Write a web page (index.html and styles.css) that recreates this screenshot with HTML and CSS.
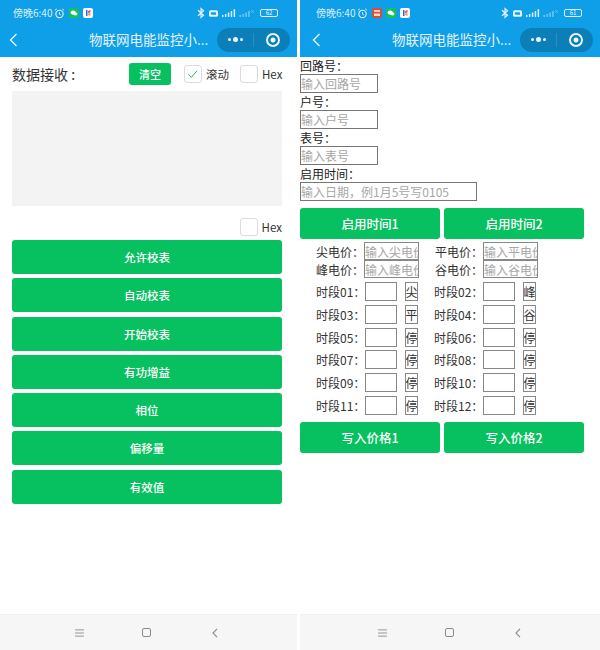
FILE: index.html
```html
<!DOCTYPE html>
<html lang="zh">
<head>
<meta charset="utf-8">
<title>物联网电能监控小程序</title>
<link rel="stylesheet" href="styles.css">
</head>
<body>
<div class="screens">
  <section class="phone phone-left">
    <header class="top">
      <div class="status">
        <span class="time">傍晚6:40</span>
        <svg class="ic-clock" viewBox="0 0 12 12"><circle cx="6" cy="6.5" r="4" fill="none" stroke="#e4f4fd" stroke-width="1.2"/><path d="M6 4.5V6.8L7.5 7.6M1 2.5 3 1M11 2.5 9 1" fill="none" stroke="#e4f4fd" stroke-width="1"/></svg>
        <svg class="ic-app" viewBox="0 0 10 10"><rect width="10" height="10" rx="2.5" fill="#16c15d"/><ellipse cx="4.2" cy="4.6" rx="2.6" ry="2.1" fill="#fff"/><ellipse cx="6.4" cy="5.8" rx="2" ry="1.6" fill="#fff"/></svg>
        <svg class="ic-app" viewBox="0 0 10 10"><rect width="10" height="10" rx="2" fill="#fff"/><path d="M3 2h1.5v6H3z" fill="#2b6de0"/><path d="M5 3 7.5 2v2.5L5 5z" fill="#e6458f"/><path d="M5 5.5 7.5 5v3L5 7z" fill="#f0a63a"/></svg>
        <span class="spacer"></span>
        <svg class="ic-bt" viewBox="0 0 8 12"><path d="M1 3.2 6.5 8.2 4 10.5V1.5L6.5 3.8 1 8.8" fill="none" stroke="#e4f4fd" stroke-width="1.2"/></svg>
        <svg class="ic-hd" viewBox="0 0 11 8"><rect width="11" height="8" rx="2" fill="#e4f4fd"/><rect x="2.5" y="2.5" width="6" height="3" fill="#0f9fe8"/></svg>
        <svg class="ic-sig" viewBox="0 0 34 10"><g fill="#e4f4fd"><rect x="0" y="7" width="1.5" height="2"/><rect x="3" y="6" width="1.5" height="3"/><rect x="6" y="4.5" width="1.5" height="4.5"/><rect x="9" y="3" width="1.5" height="6"/><rect x="12" y="1" width="1.5" height="8"/></g><g fill="#7cc8f0"><rect x="18" y="7" width="1.5" height="2"/><rect x="21" y="6" width="1.5" height="3"/><rect x="24" y="4.5" width="1.5" height="4.5"/><rect x="27" y="3" width="1.5" height="6"/><path d="M30 2 33 5M33 2 30 5" stroke="#7cc8f0" stroke-width=".7"/></g></svg>
        <span class="batt"><span class="batt-num">62</span></span>
      </div>
      <div class="nav">
        <svg class="back" viewBox="0 0 9 14"><path d="M7.5 1 1.5 7l6 6" fill="none" stroke="#e9f6fd" stroke-width="1.3"/></svg>
        <div class="title">物联网电能监控小...</div>
        <div class="capsule">
          <span class="dots"><i class="dot"></i><i class="dot dot-big"></i><i class="dot"></i></span>
          <span class="sep"></span>
          <span class="target"></span>
        </div>
      </div>
    </header>
    <main class="recv">
      <div class="recv-row">
        <span class="recv-label">数据接收 :</span>
        <button class="clear">清空</button>
        <span class="check check-on"><svg viewBox="0 0 14 12"><path d="M1.5 6.5 5 10l7-8" fill="none" stroke="#2fb457" stroke-width="1.2"/></svg></span>
        <span class="check-text">滚动</span>
        <span class="check check-hex"></span>
        <span class="check-text">Hex</span>
      </div>
      <div class="recv-box"></div>
      <div class="send-row">
        <span class="check"></span>
        <span class="check-text">Hex</span>
      </div>
      <div class="btn-list">
        <button class="btn">允许校表</button>
        <button class="btn">自动校表</button>
        <button class="btn">开始校表</button>
        <button class="btn">有功增益</button>
        <button class="btn">相位</button>
        <button class="btn">偏移量</button>
        <button class="btn">有效值</button>
      </div>
    </main>
    <footer class="softkeys">
      <svg class="key-menu" viewBox="0 0 10 9"><path d="M0 1h10M0 4.5h10M0 8h10" stroke="#8a8a8a" stroke-width="1"/></svg>
      <span class="key-home"></span>
      <svg class="key-back" viewBox="0 0 6 10"><path d="M5 .8 1 5l4 4.2" fill="none" stroke="#8a8a8a" stroke-width="1.1"/></svg>
    </footer>
  </section>

  <section class="phone phone-right">
    <header class="top">
      <div class="status">
        <span class="time">傍晚6:40</span>
        <svg class="ic-clock" viewBox="0 0 12 12"><circle cx="6" cy="6.5" r="4" fill="none" stroke="#e4f4fd" stroke-width="1.2"/><path d="M6 4.5V6.8L7.5 7.6M1 2.5 3 1M11 2.5 9 1" fill="none" stroke="#e4f4fd" stroke-width="1"/></svg>
        <svg class="ic-app" viewBox="0 0 10 10"><rect width="10" height="10" rx="2" fill="#e0483c"/><rect x="2" y="2" width="6" height="2" fill="#f6c9c0"/><rect x="2" y="5.5" width="6" height="2.5" fill="#f6e3c0"/></svg>
        <svg class="ic-app" viewBox="0 0 10 10"><rect width="10" height="10" rx="2.5" fill="#16c15d"/><ellipse cx="4.2" cy="4.6" rx="2.6" ry="2.1" fill="#fff"/><ellipse cx="6.4" cy="5.8" rx="2" ry="1.6" fill="#fff"/></svg>
        <svg class="ic-app" viewBox="0 0 10 10"><rect width="10" height="10" rx="2" fill="#fff"/><path d="M3 2h1.5v6H3z" fill="#2b6de0"/><path d="M5 3 7.5 2v2.5L5 5z" fill="#e6458f"/><path d="M5 5.5 7.5 5v3L5 7z" fill="#f0a63a"/></svg>
        <span class="spacer"></span>
        <svg class="ic-bt" viewBox="0 0 8 12"><path d="M1 3.2 6.5 8.2 4 10.5V1.5L6.5 3.8 1 8.8" fill="none" stroke="#e4f4fd" stroke-width="1.2"/></svg>
        <svg class="ic-hd" viewBox="0 0 11 8"><rect width="11" height="8" rx="2" fill="#e4f4fd"/><rect x="2.5" y="2.5" width="6" height="3" fill="#0f9fe8"/></svg>
        <svg class="ic-sig" viewBox="0 0 34 10"><g fill="#e4f4fd"><rect x="0" y="7" width="1.5" height="2"/><rect x="3" y="6" width="1.5" height="3"/><rect x="6" y="4.5" width="1.5" height="4.5"/><rect x="9" y="3" width="1.5" height="6"/><rect x="12" y="1" width="1.5" height="8"/></g><g fill="#7cc8f0"><rect x="18" y="7" width="1.5" height="2"/><rect x="21" y="6" width="1.5" height="3"/><rect x="24" y="4.5" width="1.5" height="4.5"/><rect x="27" y="3" width="1.5" height="6"/><path d="M30 2 33 5M33 2 30 5" stroke="#7cc8f0" stroke-width=".7"/></g></svg>
        <span class="batt"><span class="batt-num">61</span></span>
      </div>
      <div class="nav">
        <svg class="back" viewBox="0 0 9 14"><path d="M7.5 1 1.5 7l6 6" fill="none" stroke="#e9f6fd" stroke-width="1.3"/></svg>
        <div class="title">物联网电能监控小...</div>
        <div class="capsule">
          <span class="dots"><i class="dot"></i><i class="dot dot-big"></i><i class="dot"></i></span>
          <span class="sep"></span>
          <span class="target"></span>
        </div>
      </div>
    </header>
    <main class="config">
      <div class="field">
        <label class="f-label">回路号：</label>
        <input class="f-input" placeholder="输入回路号">
      </div>
      <div class="field">
        <label class="f-label">户号：</label>
        <input class="f-input" placeholder="输入户号">
      </div>
      <div class="field">
        <label class="f-label">表号：</label>
        <input class="f-input" placeholder="输入表号">
      </div>
      <div class="field">
        <label class="f-label">启用时间：</label>
        <input class="f-input f-wide" placeholder="输入日期，例1月5号写0105">
      </div>
      <div class="pair pair-start">
        <button class="btn-half">启用时间1</button>
        <button class="btn-half">启用时间2</button>
      </div>
      <div class="prices">
        <div class="price"><span>尖电价：</span><input class="p-input" placeholder="输入尖电价"></div>
        <div class="price"><span>平电价：</span><input class="p-input" placeholder="输入平电价"></div>
        <div class="price"><span>峰电价：</span><input class="p-input" placeholder="输入峰电价"></div>
        <div class="price"><span>谷电价：</span><input class="p-input" placeholder="输入谷电价"></div>
      </div>
      <div class="slots">
        <div class="slot"><span class="s-name">时段01：</span><input class="s-input"><span class="s-kind">尖</span></div>
        <div class="slot"><span class="s-name">时段02：</span><input class="s-input"><span class="s-kind">峰</span></div>
        <div class="slot"><span class="s-name">时段03：</span><input class="s-input"><span class="s-kind">平</span></div>
        <div class="slot"><span class="s-name">时段04：</span><input class="s-input"><span class="s-kind">谷</span></div>
        <div class="slot"><span class="s-name">时段05：</span><input class="s-input"><span class="s-kind">停</span></div>
        <div class="slot"><span class="s-name">时段06：</span><input class="s-input"><span class="s-kind">停</span></div>
        <div class="slot"><span class="s-name">时段07：</span><input class="s-input"><span class="s-kind">停</span></div>
        <div class="slot"><span class="s-name">时段08：</span><input class="s-input"><span class="s-kind">停</span></div>
        <div class="slot"><span class="s-name">时段09：</span><input class="s-input"><span class="s-kind">停</span></div>
        <div class="slot"><span class="s-name">时段10：</span><input class="s-input"><span class="s-kind">停</span></div>
        <div class="slot"><span class="s-name">时段11：</span><input class="s-input"><span class="s-kind">停</span></div>
        <div class="slot"><span class="s-name">时段12：</span><input class="s-input"><span class="s-kind">停</span></div>
      </div>
      <div class="pair">
        <button class="btn-half">写入价格1</button>
        <button class="btn-half">写入价格2</button>
      </div>
    </main>
    <footer class="softkeys">
      <svg class="key-menu" viewBox="0 0 10 9"><path d="M0 1h10M0 4.5h10M0 8h10" stroke="#8a8a8a" stroke-width="1"/></svg>
      <span class="key-home"></span>
      <svg class="key-back" viewBox="0 0 6 10"><path d="M5 .8 1 5l4 4.2" fill="none" stroke="#8a8a8a" stroke-width="1.1"/></svg>
    </footer>
  </section>
</div>
</body>
</html>
```
FILE: styles.css
```css
* { box-sizing: border-box; }
html, body { margin: 0; padding: 0; background: #fff; }
body {
  font-family: "Noto Sans CJK SC", "Noto Sans", sans-serif;
  color: #222;
}
.screens { display: flex; gap: 3px; width: 600px; height: 650px; overflow: hidden; }
.phone { display: flex; flex-direction: column; height: 650px; background: #fff; }
.phone-left { width: 297px; }
.phone-right { width: 300px; }

.top { background: #0f9fe8; height: 57px; flex: none; color: #eaf6fd; }
.status { height: 24px; display: flex; align-items: center; padding: 2px 19px 0 13px; gap: 3px; }
.phone-right .status { padding-left: 16px; padding-right: 18px; }
.time { font-size: 10px; line-height: 14px; margin-right: -1px; font-family: "Noto Sans CJK SC", sans-serif; color: #d8eefb; }
.ic-clock { width: 11px; height: 11px; }
.ic-app { width: 10px; height: 10px; margin-left: 1px; }
.spacer { flex: 1; }
.ic-bt { width: 8px; height: 12px; }
.ic-hd { width: 9px; height: 7px; margin-left: 1px; }
.ic-sig { width: 33px; height: 10px; margin-left: 1px; }
.batt { width: 18px; height: 8px; border: 1px solid #e4f4fd; border-radius: 2px; margin-left: 2px; display: flex; align-items: center; justify-content: center; }
.batt-num { font-size: 6px; line-height: 6px; color: #eaf6fd; }

.nav { height: 33px; display: flex; align-items: center; padding: 0 7px 2px 9px; position: relative; }
.phone-right .nav { padding-left: 12px; }
.back { width: 9px; height: 14px; }
.title { position: absolute; left: 89px; top: 5px; font-size: 13.5px; line-height: 20px; color: #e6f4fc; white-space: nowrap; }
.phone-right .title { left: 92px; }
.capsule { margin-left: auto; width: 73px; height: 24px; border-radius: 12px; background: #0c7fb9; display: flex; align-items: center; }
.dots { width: 36px; display: flex; align-items: center; justify-content: center; gap: 2px; }
.dot { width: 3px; height: 3px; border-radius: 50%; background: #eaf6fd; }
.dot-big { width: 5px; height: 5px; }
.sep { width: 1px; height: 14px; background: #2a8fc4; }
.target { width: 14px; height: 14px; border: 2.5px solid #eaf6fd; border-radius: 50%; margin-left: 12px; background: radial-gradient(circle, #eaf6fd 0 2.2px, transparent 2.8px); }

.recv { flex: 1; padding: 6px 15px 0 12px; }
.recv-row { display: flex; align-items: center; height: 22px; }
.recv-label { font-size: 14px; width: 117px; flex: none; color: #333; }
.clear { width: 42px; height: 22px; border: 0; border-radius: 3px; background: #07c160; color: #fff; font: 500 11px/22px "Noto Sans CJK SC", sans-serif; padding: 0; margin-right: 13px; flex: none; }
.check { width: 18px; height: 18px; border: 1px solid #dcdcdc; border-radius: 3px; background: #fff; display: inline-flex; align-items: center; justify-content: center; flex: none; }
.check svg { width: 12px; height: 10px; }
.check-hex { margin-left: 11px; }
.check-text { font-size: 11.5px; line-height: 18px; margin-left: 4px; color: #333; white-space: nowrap; }
.recv-box { height: 115px; margin-top: 6px; background: #f3f3f3; }
.send-row { display: flex; justify-content: flex-end; align-items: center; height: 18px; margin-top: 12px; }
.btn-list { display: flex; flex-direction: column; gap: 4.25px; margin-top: 4px; }
.btn { height: 34px; border: 0; border-radius: 3px; background: #07c160; color: #fff; font: 500 11.5px/34px "Noto Sans CJK SC", sans-serif; padding: 0; }

.softkeys { height: 36px; flex: none; background: #f6f6f6; border-top: 1px solid #f0f0f0; display: flex; align-items: center; padding-left: 75px; }
.phone-right .softkeys { padding-left: 78px; }
.key-menu { width: 9px; height: 8px; }
.key-home { width: 9px; height: 9px; border: 1.3px solid #8a8a8a; border-radius: 2px; margin-left: 58px; }
.key-back { width: 6px; height: 10px; margin-left: 61px; }

.config { flex: 1; font-size: 12px; }
.field { display: flex; flex-direction: column; align-items: flex-start; }
.f-label { font-size: 12px; line-height: 17px; color: #222; }
.f-input { width: 78px; height: 19px; border: 1px solid #777; padding: 0; font: 12px/17px "Noto Sans CJK SC", sans-serif; background: #fff; outline: 0; }
.f-wide { width: 177px; }
input::placeholder { color: #a6a6a6; opacity: 1; }
.pair { display: grid; grid-template-columns: 140px 140px; gap: 4px; }
.pair-start { margin-top: 7px; }
.btn-half { height: 31px; border: 0; border-radius: 3px; background: #07c160; color: #fff; font: 500 12.5px/31px "Noto Sans CJK SC", sans-serif; padding: 0; }

.prices { display: grid; grid-template-columns: 119px 119px; margin-top: 3px; padding-left: 16px; }
.price { display: flex; align-items: center; height: 18px; font-size: 12px; color: #333; white-space: nowrap; }
.price span { width: 48px; flex: none; }
.p-input { width: 55px; height: 18px; border: 1px solid #888; padding: 0; font: 12px/16px "Noto Sans CJK SC", sans-serif; outline: 0; }
.slots { display: grid; grid-template-columns: 118px 103px; row-gap: 3.8px; margin-top: 4px; padding-left: 16px; }
.slot { display: flex; align-items: center; height: 19px; font-size: 12px; color: #333; }
.s-name { width: 49px; flex: none; white-space: nowrap; }
.s-input { width: 32px; height: 19px; border: 1px solid #888; padding: 0; outline: 0; flex: none; }
.s-kind { width: 13px; height: 19px; border: 1px solid #888; margin-left: 8px; font-size: 12px; line-height: 17px; overflow: hidden; color: #333; display: flex; justify-content: center; flex: none; }
.slots + .pair { margin-top: 7px; }
```
